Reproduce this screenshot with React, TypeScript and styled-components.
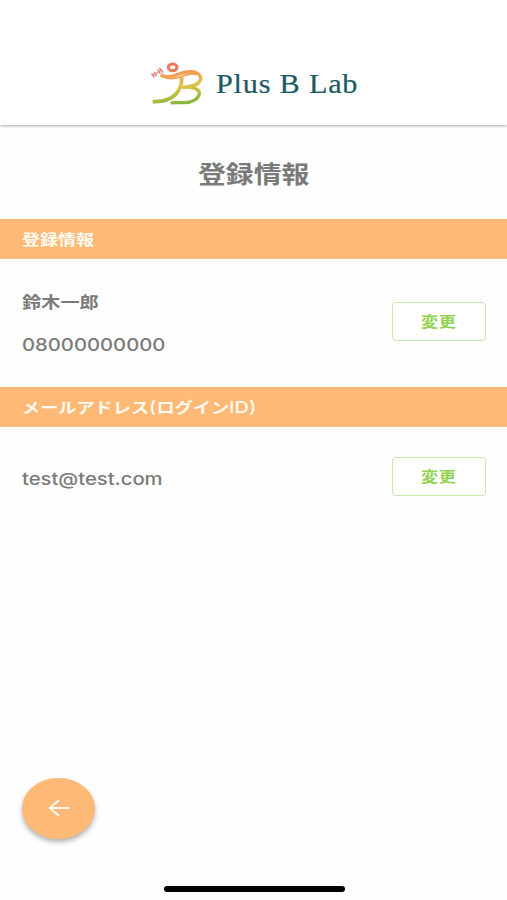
import React from "react";
import styled, { createGlobalStyle } from "styled-components";

const GlobalStyle = createGlobalStyle`
  * { box-sizing: border-box; }
  body {
    margin: 0;
    background: #fefefe;
    font-family: Inter, "Noto Sans CJK JP", sans-serif;
  }
`;

const Screen = styled.div`
  display: flex;
  flex-direction: column;
  width: 100%;
  height: 900px;
  overflow: hidden;
  background: #fefefe;
`;

const Header = styled.header`
  display: flex;
  flex: none;
  height: 125px;
  padding: 59px 0 0 147px;
  background: #fff;
  box-shadow: 0 1px 3px rgba(0, 0, 0, 0.32);
`;

const Mark = styled.svg`
  flex: none;
  width: 60px;
  height: 48px;
`;

const Wide = styled.span<{ $x: number }>`
  display: inline-block;
  white-space: nowrap;
  transform: scaleX(${(p) => p.$x});
  transform-origin: left center;
`;

const Brand = styled.div`
  margin-left: 9px;
  font: 500 27px/51px "Liberation Serif", serif;
  letter-spacing: 0.7px;
  color: #1c5a62;
  -webkit-text-stroke: 0.2px #1c5a62;
`;

const Title = styled.h1`
  flex: none;
  height: 94px;
  margin: 0;
  padding-left: 198px;
  font-size: 24px;
  font-weight: 700;
  line-height: 100px;
  color: #7a7a7a;
`;

const SectionBar = styled.h2`
  flex: none;
  height: 40px;
  margin: 0;
  padding-left: 22px;
  background: #ffb976;
  color: #fffaf0;
  font-size: 15px;
  font-weight: 700;
  line-height: 42px;
`;

const Latin = styled.span`
  font-size: 16.5px;
  font-weight: 500;
  line-height: 1;
`;

const Row = styled.section<{ $height: number }>`
  display: flex;
  flex: none;
  align-items: center;
  justify-content: space-between;
  height: ${(p) => p.$height}px;
  padding: 0 21px 0 22px;
`;

const Details = styled.div`
  color: #7a7a7a;
  font-size: 17px;
  font-weight: 500;
  line-height: 43px;
`;

const Name = styled.div`
  padding-top: 1px;
  font-size: 16px;
  font-weight: 700;
`;

const Email = styled.div`
  padding-top: 2px;
`;

const ChangeButton = styled.button`
  width: 94px;
  height: 39px;
  margin-top: -4px;
  padding: 0 0 0 28px;
  border: 1.5px solid #c5e8ad;
  border-radius: 4px;
  background: #fff;
  color: #91d351;
  font: 700 14.5px/34px "Noto Sans CJK JP", sans-serif;
  letter-spacing: 0.5px;
  text-align: left;
`;

const Footer = styled.footer`
  display: flex;
  flex: 1;
  flex-direction: column;
  justify-content: flex-end;
  padding: 0 22px 8px;
`;

const BackButton = styled.button`
  display: grid;
  place-items: center;
  width: 73px;
  height: 61px;
  padding: 0 0 2px;
  border: 0;
  border-radius: 50%;
  background: #ffb976;
  box-shadow: 0 3px 5px rgba(0, 0, 0, 0.3);
`;

const HomeIndicator = styled.div`
  width: 181px;
  height: 6px;
  margin: 47px 0 0 142px;
  border-radius: 3px;
  background: #000;
`;

function LogoMark() {
  return (
    <Mark viewBox="0 0 180 144" fill="none" aria-hidden="true">
      <defs>
        <linearGradient id="body" x1="75" y1="10" x2="95" y2="138" gradientUnits="userSpaceOnUse">
          <stop stopColor="#ef7161" />
          <stop offset=".33" stopColor="#f5a04f" />
          <stop offset=".6" stopColor="#d9c445" />
          <stop offset="1" stopColor="#83b53a" />
        </linearGradient>
      </defs>
      <ellipse cx="77" cy="25" rx="13" ry="10" stroke="#ee795d" strokeWidth="9" />
      <path d="m17 49 27-16" stroke="#e99585" strokeWidth="4" />
      <path d="m15 45 6 9M22 41l6 9M33 33l6 9M38 28l9 11" stroke="#e58a81" strokeWidth="5" strokeLinecap="round" />
      <path d="M41 48C54 56 75 54 94 46C115 37 141 34 154 45C169 57 158 73 141 79C132 82 119 84 109 85C131 82 158 88 157 104C155 120 136 131 111 131C97 131 84 129 71 132" stroke="url(#body)" strokeWidth="10" strokeLinejoin="round" />
      <path d="M44 49C61 61 83 60 104 53C122 45 139 42 149 47" stroke="#f0a34e" strokeWidth="6" />
      <path d="M104 56C106 77 100 91 85 107C67 125 43 129 17 128" stroke="url(#body)" strokeWidth="11" />
    </Mark>
  );
}

function Change() {
  return <ChangeButton><Wide $x={1.18}>変更</Wide></ChangeButton>;
}

export default function App() {
  return (
    <>
      <GlobalStyle />
      <Screen>
        <Header>
          <LogoMark />
          <Brand><Wide $x={1.12}>Plus B Lab</Wide></Brand>
        </Header>
        <Title><Wide $x={1.16}>登録情報</Wide></Title>
        <SectionBar><Wide $x={1.2}>登録情報</Wide></SectionBar>
        <Row $height={128}>
          <Details>
            <Name><Wide $x={1.2}>鈴木一郎</Wide></Name>
            <div><Wide $x={1.19}>08000000000</Wide></div>
          </Details>
          <Change />
        </Row>
        <SectionBar>
          <Wide $x={1.21}>メールアドレス<Latin>(</Latin>ログイン<Latin>ID)</Latin></Wide>
        </SectionBar>
        <Row $height={102}>
          <Email as={Details}><Wide $x={1.19}>test@test.com</Wide></Email>
          <Change />
        </Row>
        <Footer>
          <BackButton aria-label="戻る">
            <svg width="22" height="18" viewBox="0 0 22 18" fill="none" aria-hidden="true">
              <path d="M21 9H2M11 1 2 9l9 8" stroke="#fff8e9" strokeWidth="2.2" />
            </svg>
          </BackButton>
          <HomeIndicator />
        </Footer>
      </Screen>
    </>
  );
}
